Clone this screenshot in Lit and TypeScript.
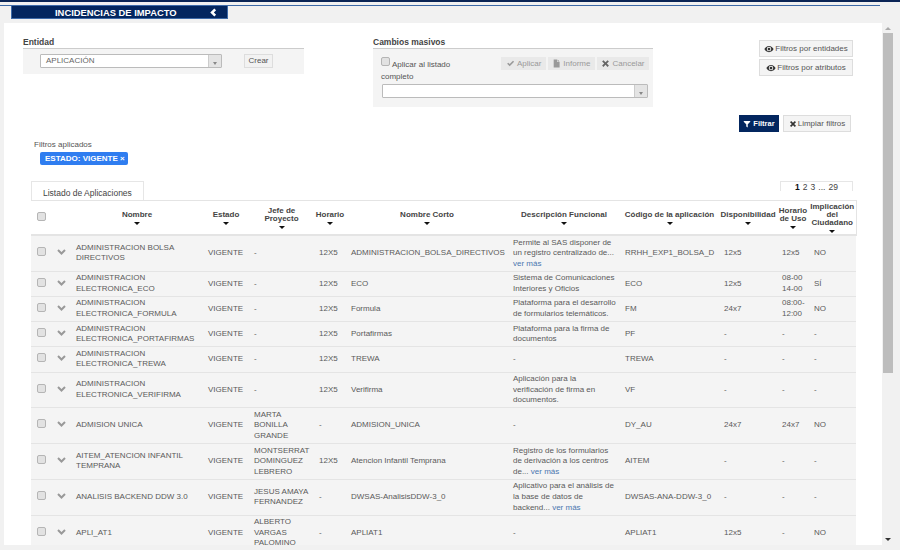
import { LitElement, html, css, svg } from "lit";
import { customElement } from "lit/decorators.js";

type Row = string[];

const headers = [
  "", "", "Nombre", "Estado", "Jefe de\nProyecto", "Horario", "Nombre Corto", "Descripción Funcional",
  "Código de la aplicación", "Disponibilidad", "Horario\nde Uso", "Implicación\ndel\nCiudadano",
];

const rows: Row[] = [
  ["ADMINISTRACION BOLSA DIRECTIVOS", "VIGENTE", "-", "12X5", "ADMINISTRACION_BOLSA_DIRECTIVOS", "Permite al SAS disponer de\nun registro centralizado de...\n|ver más", "RRHH_EXP1_BOLSA_D", "12x5", "12x5", "NO"],
  ["ADMINISTRACION ELECTRONICA_ECO", "VIGENTE", "-", "12X5", "ECO", "Sistema de Comunicaciones\nInteriores y Oficios", "ECO", "12x5", "08-00 14-00", "SÍ"],
  ["ADMINISTRACION ELECTRONICA_FORMULA", "VIGENTE", "-", "12X5", "Formula", "Plataforma para el desarrollo\nde formularios telemáticos.", "FM", "24x7", "08:00-12:00", "NO"],
  ["ADMINISTRACION ELECTRONICA_PORTAFIRMAS", "VIGENTE", "-", "12X5", "Portafirmas", "Plataforma para la firma de\ndocumentos", "PF", "-", "-", "-"],
  ["ADMINISTRACION ELECTRONICA_TREWA", "VIGENTE", "-", "12X5", "TREWA", "-", "TREWA", "-", "-", "-"],
  ["ADMINISTRACION ELECTRONICA_VERIFIRMA", "VIGENTE", "-", "12X5", "Verifirma", "Aplicación para la\nverificación de firma en\ndocumentos.", "VF", "-", "-", "-"],
  ["ADMISION UNICA", "VIGENTE", "MARTA BONILLA GRANDE", "-", "ADMISION_UNICA", "-", "DY_AU", "24x7", "24x7", "NO"],
  ["AITEM_ATENCION INFANTIL TEMPRANA", "VIGENTE", "MONTSERRAT DOMINGUEZ LEBRERO", "12X5", "Atencion Infantil Temprana", "Registro de los formularios\nde derivación a los centros\nde... |ver más", "AITEM", "-", "-", "-"],
  ["ANALISIS BACKEND DDW 3.0", "VIGENTE", "JESUS AMAYA FERNANDEZ", "-", "DWSAS-AnalisisDDW-3_0", "Aplicativo para el análisis de\nla base de datos de\nbackend... |ver más", "DWSAS-ANA-DDW-3_0", "-", "-", "-"],
  ["APLI_AT1", "VIGENTE", "ALBERTO VARGAS PALOMINO", "-", "APLIAT1", "-", "APLIAT1", "12x5", "-", "NO"],
];

const colWidths = [20, 20, 132, 46, 65, 32, 162, 112, 99, 58, 32, 47];

const eye = svg`<path d="M8 3C4.6 3 2 5.4 .6 8c1.4 2.6 4 5 7.4 5s6-2.4 7.4-5C14 5.4 11.400 3 8 3zm0 8.600A3.600 3.600 0 1 1 8 4.400a3.600 3.600 0 0 1 0 7.200zM8 5.800a2.200 2.200 0 1 0 0 4.400 2.200 2.200 0 0 0 0-4.400z"/>`;
const check = svg`<path d="M2 8.500 4 6.500l2.600 2.600L12.400 3l2 2-7.800 8z"/>`;
const file = svg`<path d="M3 1h6v4.500h4.500V15H3zM10 1l3.500 3.500H10z"/>`;
const times = svg`<path d="M4.300 2 8 5.700 11.700 2 14 4.300 10.300 8l3.700 3.700-2.300 2.300L8 10.300 4.300 14 2 11.700 5.700 8 2 4.300z"/>`;
const funnel = svg`<path d="M1.500 2h13v1.600L9.500 8.600V15l-3-2V8.600l-5-5z"/>`;

@customElement("app-root")
export class AppRoot extends LitElement {
  static styles = css`
    :host {
      display: block;
      width: 900px;
      height: 550px;
      overflow: hidden;
      background: #f1f1f1;
      font-family: "Liberation Sans", Arial, sans-serif;
      font-size: 8px;
      color: #5a5a5a;
    }
    .topline { height: 2px; background: #0b2556; }
    .blueline { margin: 3px 20px 0 0; height: 1px; background: #3d6aa8; }
    .title {
      margin-left: 11px;
      width: 217px;
      height: 13px;
      box-sizing: border-box;
      background: #03265f;
      border: 1px solid #3d6aa8;
      border-top: none;
      color: #fff;
      font-size: 9.400px;
      font-weight: bold;
      display: flex;
      align-items: center;
      padding-left: 43px;
    }
    .title svg { margin-left: 31px; width: 9px; height: 9px; fill: #fff; }
    .main { display: flex; margin-top: 4px; height: 522px; }
    .panel {
      margin-left: 4px;
      width: 878px;
      background: #fff;
      box-sizing: border-box;
      padding: 14px 0 0 19px;
      overflow: hidden;
    }
    .scroll {
      margin-left: 1px;
      width: 10px;
      display: flex;
      flex-direction: column;
      align-items: center;
    }
    .up { margin-top: 4px; border: 3px solid transparent; border-top: 0; border-bottom: 3px solid #aaa; }
    .thumb { margin-top: 3px; width: 10px; height: 340px; background: #bdbdbd; }
    .down { margin-top: auto; margin-bottom: 4px; border: 3px solid transparent; border-bottom: 0; border-top: 3px solid #333; }

    .top { display: flex; align-items: flex-start; height: 70px; }
    .group-label { font-weight: bold; font-size: 8.500px; color: #444; height: 11px; line-height: 11px; }
    .entidad { width: 281px; margin-right: 69px; }
    .cambios { width: 280px; }
    .boxed { background: #f4f4f4; border-top: 1px solid #ccc; box-sizing: border-box; }
    .entidad .boxed { height: 26px; display: flex; align-items: flex-start; padding: 5px 0 0 17px; }
    .select {
      box-sizing: border-box;
      display: flex;
      height: 14px;
      background: #fff;
      border: 1px solid #bbb;
      border-radius: 1px;
      color: #666;
      line-height: 12px;
    }
    .select span { flex: 1; padding-left: 5px; }
    .select i { width: 13px; background: #e4e4e4; border-left: 1px solid #ccc; display: flex; align-items: flex-end; justify-content: center; padding-bottom: 2px; box-sizing: border-box; }
    .select i::after { content: ""; border: 2px solid transparent; border-bottom: 0; border-top: 3px solid #888; }
    .s1 { width: 182px; }
    .crear {
      margin-left: 22px;
      width: 29px;
      height: 14px;
      box-sizing: border-box;
      text-align: center;
      line-height: 12px;
      background: #f2f2f2;
      border: 1px solid #ddd;
      color: #555;
    }
    .cambios .boxed { height: 59px; padding: 8px 4px 0 8px; }
    .cb-row { display: flex; justify-content: space-between; align-items: flex-start; height: 27px; }
    .apply { width: 100px; line-height: 12px; color: #555; }
    .ck {
      display: inline-block;
      box-sizing: border-box;
      width: 9px;
      height: 9px;
      background: #e2e2e2;
      border: 1px solid #b5b5b5;
      border-radius: 2px;
    }
    .apply .ck { vertical-align: 1px; margin-right: 2px; }
    .mass { display: flex; gap: 2px; }
    .mass span {
      height: 13px;
      display: flex;
      align-items: center;
      gap: 2px;
      padding: 0 4.500px;
      background: #e9e9e9;
      color: #999;
    }
    .mass svg { width: 9px; height: 9px; fill: #999; }
    .mass span:last-child svg { fill: #666; }
    .s2 { width: 266px; margin-left: 1px; }
    .side { margin-left: 106px; width: 94px; display: flex; flex-direction: column; gap: 2px; padding-top: 3px; }
    .side span, .limpiar {
      height: 17px;
      box-sizing: border-box;
      background: #f4f4f4;
      border: 1px solid #ddd;
      display: flex;
      align-items: center;
      justify-content: center;
      gap: 1px;
      color: #555;
    }
    .side svg { width: 10px; height: 10px; fill: #333; }
    .actions { display: flex; justify-content: flex-end; gap: 4px; margin: 8px 31px 0 0; }
    .filtrar {
      width: 40px;
      height: 17px;
      background: #03265f;
      color: #fff;
      display: flex;
      align-items: center;
      justify-content: center;
      gap: 2px;
      font-weight: bold;
      font-size: 7.500px;
    }
    .filtrar svg { width: 8px; height: 8px; fill: #fff; }
    .limpiar { width: 68px; }
    .limpiar svg { width: 8px; height: 8px; fill: #333; }
    .applied { margin: 8px 0 0 11px; line-height: 10px; color: #555; }
    .chip {
      margin: 2px 0 0 17px;
      height: 13px;
      line-height: 13px;
      width: 88px;
      box-sizing: border-box;
      padding-left: 5px;
      border-radius: 2px;
      background: #2f7df0;
      color: #fff;
      font-weight: bold;
      white-space: nowrap;
    }
    .tabs { margin: 16px 29px 0 8px; display: flex; justify-content: space-between; align-items: flex-start; height: 19px; }
    .tab {
      width: 113px;
      height: 19px;
      box-sizing: border-box;
      border: 1px solid #e6e6e6;
      border-bottom: none;
      padding: 6px 0 0 11px;
      color: #444;
      line-height: 11px;
      font-size: 8.500px;
    }
    .pager {
      width: 73px;
      height: 10px;
      box-sizing: border-box;
      border: 1px solid #e6e6e6;
      border-bottom: none;
      display: flex;
      justify-content: center;
      gap: 3px;
      line-height: 10px;
      color: #444;
      font-size: 8.500px;
    }
    .pager b { color: #111; }
    .wrap { margin-left: 8px; width: 825px; }
    table {
      table-layout: fixed;
      border-collapse: collapse;
      width: 825px;
      border-top: 1px solid #e4e4e4;
    }
    th {
      height: 33px;
      padding: 0;
      font-size: 8px;
      font-weight: bold;
      color: #444;
      line-height: 8px;
      text-align: center;
      vertical-align: middle;
      border-bottom: 2px solid #e4e4e4;
      white-space: pre-line;
    }
    th.r { border-right: 1px solid #e4e4e4; }
    .caret { display: block; margin: 3px auto 0; width: 0; border: 3.500px solid transparent; border-bottom: 0; border-top: 3px solid #111; }
    td {
      background: #f4f4f4;
      padding: 1.500px 5px;
      line-height: 10.600px;
      vertical-align: middle;
      border-bottom: 1px solid #e4e4e4;
      overflow: hidden;
    }
    td.c { padding: 0; text-align: center; }
    td.n { overflow: visible; white-space: nowrap; }
    td.d { padding-right: 0; white-space: pre; }
    .chev { width: 9px; height: 6px; fill: none; stroke: #999; stroke-width: 2; }
    a { color: #4a76b0; text-decoration: none; }
  `;

  desc(text: string) {
    const [body, more] = text.split("|");
    if (!more) return body;
    return html`${body}<a>${more}</a>`;
  }

  renderRow(r: Row) {
    return html`<tr>
      <td class="c"><span class="ck"></span></td>
      <td class="c"><svg class="chev" viewBox="0 0 9 6"><path d="M1 1l3.500 3.500L8 1"/></svg></td>
      <td>${r[0]}</td>
      <td class="n">${r[1]}</td>
      <td>${r[2]}</td>
      <td>${r[3]}</td>
      <td class="n">${r[4]}</td>
      <td class="d">${this.desc(r[5])}</td>
      <td class="n">${r[6]}</td>
      <td>${r[7]}</td>
      <td>${r[8]}</td>
      <td>${r[9]}</td>
    </tr>`;
  }

  render() {
    return html`
      <div class="topline"></div>
      <div class="blueline"></div>
      <div class="title">
        INCIDENCIAS DE IMPACTO
        <svg viewBox="0 0 10 10"><path d="M7 .5 9 2.500 6.500 5 9 7.500 7 9.500 2.500 5z"/></svg>
      </div>
      <div class="main">
        <div class="panel">
          <div class="top">
            <div class="entidad">
              <div class="group-label">Entidad</div>
              <div class="boxed">
                <div class="select s1"><span>APLICACIÓN</span><i></i></div>
                <div class="crear">Crear</div>
              </div>
            </div>
            <div class="cambios">
              <div class="group-label">Cambios masivos</div>
              <div class="boxed">
                <div class="cb-row">
                  <div class="apply"><span class="ck"></span>Aplicar al listado completo</div>
                  <div class="mass">
                    <span><svg viewBox="0 0 16 16">${check}</svg>Aplicar</span>
                    <span><svg viewBox="0 0 16 16">${file}</svg>Informe</span>
                    <span><svg viewBox="0 0 16 16">${times}</svg>Cancelar</span>
                  </div>
                </div>
                <div class="select s2"><span></span><i></i></div>
              </div>
            </div>
            <div class="side">
              <span><svg viewBox="0 0 16 16">${eye}</svg>Filtros por entidades</span>
              <span><svg viewBox="0 0 16 16">${eye}</svg>Filtros por atributos</span>
            </div>
          </div>
          <div class="actions">
            <div class="filtrar"><svg viewBox="0 0 16 16">${funnel}</svg>Filtrar</div>
            <div class="limpiar"><svg viewBox="0 0 16 16">${times}</svg>Limpiar filtros</div>
          </div>
          <div class="applied">Filtros aplicados</div>
          <div class="chip">ESTADO: VIGENTE ×</div>
          <div class="tabs">
            <div class="tab">Listado de Aplicaciones</div>
            <div class="pager"><b>1</b><span>2</span><span>3</span><span>...</span><span>29</span></div>
          </div>
          <div class="wrap">
            <table>
              <colgroup>${colWidths.map((w) => html`<col style="width:${w}px" />`)}</colgroup>
              <thead>
                <tr>
                  <th><span class="ck"></span></th>
                  ${headers.slice(1).map((h, i) => html`<th class=${i === 10 ? "r" : ""}>${h}${h ? html`<span class="caret"></span>` : ""}</th>`)}
                </tr>
              </thead>
              <tbody>${rows.map((r) => this.renderRow(r))}</tbody>
            </table>
          </div>
        </div>
        <div class="scroll">
          <div class="up"></div>
          <div class="thumb"></div>
          <div class="down"></div>
        </div>
      </div>
    `;
  }
}
